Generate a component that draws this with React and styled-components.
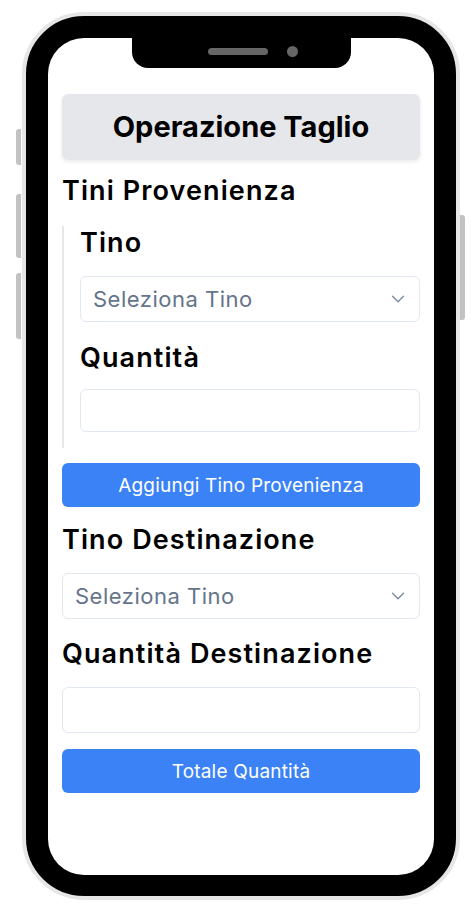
import React from 'react'
import styled, { createGlobalStyle } from 'styled-components'
import { ChevronDown } from 'lucide-react'

const GlobalStyle = createGlobalStyle`
    * { box-sizing: border-box; }
    body {
        margin: 0;
        background: #ffffff;
        font-family: Inter, "Noto Sans", Arial, sans-serif;
    }
`;

function TinoSelect() {
  return (
    <SelectBox>
      <SelectText>Seleziona Tino</SelectText>
      <ChevronDown size={22} strokeWidth={1.5} color="#7b8aa0" />
    </SelectBox>
  )
}

function App() {
  return (
    <Stage>
      <GlobalStyle />
      <Phone>
        <SideButton side="left" top={113} height={36} />
        <SideButton side="left" top={178} height={64} />
        <SideButton side="left" top={257} height={66} />
        <SideButton side="right" top={199} height={105} />
        <Screen>
          <Notch>
            <Speaker />
            <Camera />
          </Notch>
          <Content>
            <Header>Operazione Taglio</Header>
            <Heading top={15}>Tini Provenienza</Heading>
            <Group>
              <Heading>Tino</Heading>
              <Field top={17}>
                <TinoSelect />
              </Field>
              <Heading top={20}>Quantità</Heading>
              <Field top={15}>
                <Input type="text" h={43} />
              </Field>
            </Group>
            <Button top={15}>Aggiungi Tino Provenienza</Button>
            <Heading top={17}>Tino Destinazione</Heading>
            <Field top={17}>
              <TinoSelect />
            </Field>
            <Heading top={19}>Quantità Destinazione</Heading>
            <Field top={17}>
              <Input type="text" h={46} />
            </Field>
            <Button top={16}>Totale Quantità</Button>
          </Content>
        </Screen>
      </Phone>
    </Stage>
  )
}

const Stage = styled.div`
    padding: 12px 0 0 22px;
    min-height: 911px;
`;

const Phone = styled.div`
    position: relative;
    width: 438px;
    height: 888px;
    background: #000;
    border: 4px solid #e6e6e6;
    border-radius: 62px;
    padding: 22px 22px 21px 22px;
`;

const SideButton = styled.span`
    position: absolute;
    top: ${p => p.top}px;
    height: ${p => p.height}px;
    width: 5px;
    background: #c2c2c2;
    ${p => p.side === 'left'
      ? 'left: -10px; border-radius: 3px 0 0 3px;'
      : 'right: -9px; border-radius: 0 3px 3px 0;'}
`;

const Screen = styled.div`
    width: 100%;
    height: 100%;
    background: #fff;
    border-radius: 36px;
    overflow: hidden;
    display: flex;
    flex-direction: column;
`;

const Notch = styled.div`
    align-self: center;
    width: 219px;
    height: 30px;
    background: #000;
    border-radius: 0 0 16px 16px;
    display: flex;
    align-items: center;
    gap: 19px;
    padding: 0 0 4px 76px;
    margin-left: 1px;
`;

const Speaker = styled.span`
    width: 60px;
    height: 7px;
    border-radius: 4px;
    background: #666;
`;

const Camera = styled.span`
    width: 11px;
    height: 11px;
    border-radius: 50%;
    background: #666;
`;

const Content = styled.div`
    padding: 26px 14px 0 14px;
    display: flex;
    flex-direction: column;
`;

const Header = styled.div`
    height: 66px;
    background: #e5e7eb;
    border-radius: 6px;
    box-shadow: 0 2px 4px rgba(0, 0, 0, 0.08);
    display: flex;
    align-items: center;
    justify-content: center;
    font-size: 29px;
    font-weight: 700;
    color: #000;
    padding-bottom: 1px;
`;

const Heading = styled.h2`
    margin: ${p => p.top || 0}px 0 0 0;
    font-size: 27px;
    line-height: 32px;
    font-weight: 600;
    letter-spacing: 1.1px;
    color: #000;
`;

const Group = styled.div`
    margin-top: 19px;
    border-left: 2px solid #e5e7eb;
    padding: 1px 0 16px 16px;
    display: flex;
    flex-direction: column;
`;

const Field = styled.div`
    margin-top: ${p => p.top || 0}px;
`;

const SelectBox = styled.div`
    height: 46px;
    border: 1px solid #e2e8f0;
    border-radius: 6px;
    background: #fff;
    display: flex;
    align-items: center;
    justify-content: space-between;
    padding: 0 10px 0 12px;
`;

const SelectText = styled.span`
    font-size: 22px;
    letter-spacing: 0.5px;
    color: #64748b;
`;

const Input = styled.input`
    display: block;
    width: 100%;
    height: ${p => p.h}px;
    border: 1px solid #e2e8f0;
    border-radius: 6px;
    background: #fff;
    padding: 0 12px;
    font-size: 18px;
    font-family: inherit;
    outline: none;
`;

const Button = styled.button`
    margin-top: ${p => p.top || 0}px;
    height: 44px;
    width: 100%;
    border: none;
    border-radius: 6px;
    background: #3b82f6;
    color: #fff;
    font-family: inherit;
    font-size: 19px;
    letter-spacing: 0.2px;
    cursor: pointer;
`;

export default App
